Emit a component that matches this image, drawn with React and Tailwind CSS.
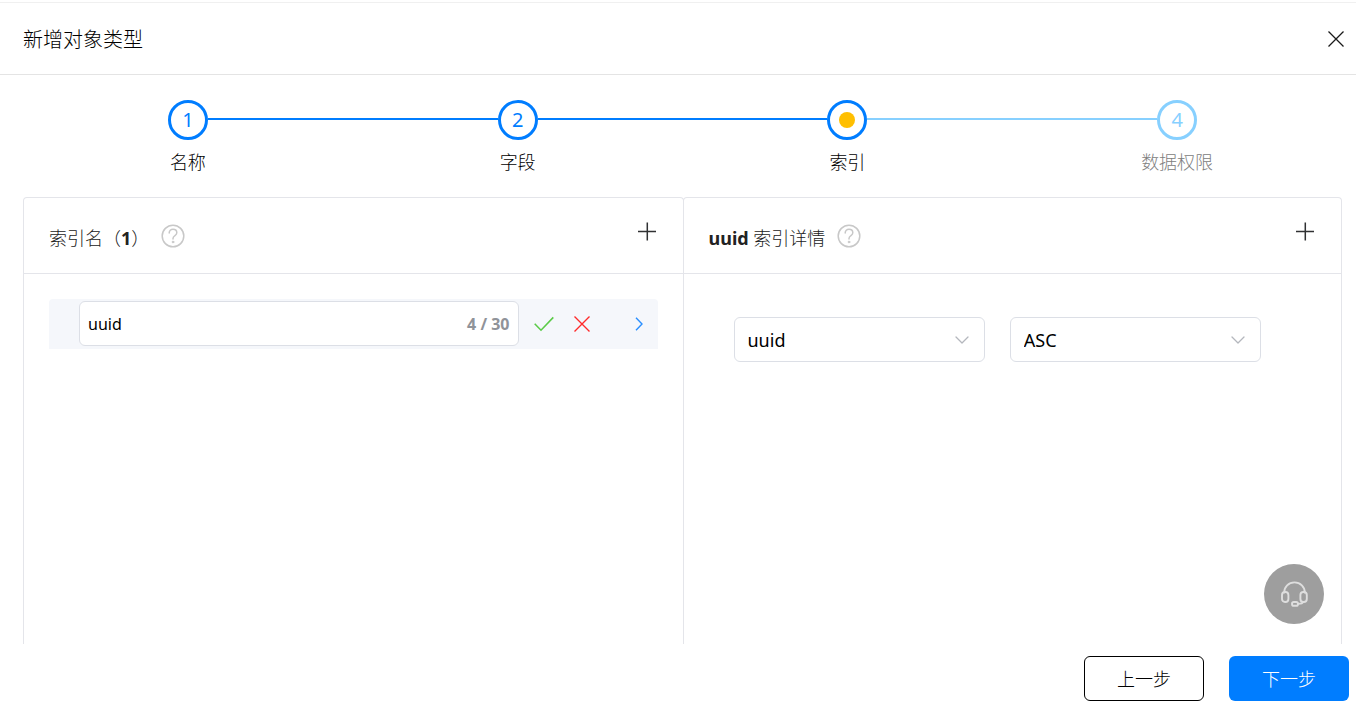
import React, { useState } from 'react';

const steps = [
  { id: 1, label: '名称', status: 'done' },
  { id: 2, label: '字段', status: 'done' },
  { id: 3, label: '索引', status: 'active' },
  { id: 4, label: '数据权限', status: 'wait' },
];

const HelpIcon = () => (
  <svg width="24" height="24" viewBox="0 0 24 24" fill="none" stroke="#c8c8c8" strokeWidth="1.5" strokeLinecap="round">
    <circle cx="12" cy="12" r="10.8" />
    <path d="M8.2 8.9c0-2.1 1.6-3.6 3.8-3.6s3.8 1.5 3.8 3.4c0 1.5-.9 2.2-1.9 3-1.1.8-1.9 1.5-1.9 2.7v.6" />
    <circle cx="12" cy="18" r="0.9" fill="#c8c8c8" strokeWidth="0.8" />
  </svg>
);

const PlusIcon = () => (
  <svg width="20" height="20" viewBox="0 0 20 20" stroke="#303133" strokeWidth="1.5">
    <path d="M1 9.5h18M10.3 0.5v18" />
  </svg>
);

const Step = ({ step, isFirst }) => {
  const wait = step.status === 'wait';
  return (
    <li className="relative flex flex-col items-center">
      {/* Connector to the previous step */}
      {!isFirst && (
        <span
          className={`absolute top-[18px] right-1/2 mr-5 h-0.5 w-[calc(100%-40px)] ${wait ? 'bg-[#87d0ff]' : 'bg-[#007dff]'}`}
        />
      )}
      <span
        className={`flex h-10 w-10 items-center justify-center rounded-full border-3 text-xl ${
          wait ? 'border-[#87d0ff] text-[#87d0ff]' : 'border-[#007dff] text-[#007dff]'
        }`}
      >
        {step.status === 'active' ? <span className="h-4 w-4 rounded-full bg-[#ffbf00]" /> : step.id}
      </span>
      <span className={`mt-2 text-lg font-light ${wait ? 'text-[#808080]' : 'text-black'}`}>{step.label}</span>
    </li>
  );
};

const Panel = ({ title, addLabel, className = '', children }) => (
  <section className={`rounded-t border border-b-0 border-[#e4e5ea] ${className}`}>
    <header className="flex h-[76px] items-start justify-between border-b border-[#e4e5ea] pr-[26px] pl-[25px]">
      <div className="mt-6 flex items-start">
        <h2 className="mt-0.5 text-lg leading-7 font-light text-[#222]">{title}</h2>
        <button type="button" aria-label="帮助" className="ml-3 mt-0.5">
          <HelpIcon />
        </button>
      </div>
      <button type="button" aria-label={addLabel} className="mt-6">
        <PlusIcon />
      </button>
    </header>
    {children}
  </section>
);

const Select = ({ label, value, onChange, options }) => (
  <div className="relative flex-1">
    <select
      aria-label={label}
      value={value}
      onChange={(e) => onChange(e.target.value)}
      className="h-[45px] w-full appearance-none rounded-md border border-[#dcdfe6] bg-white pr-10 pl-[13px] text-lg text-black outline-none"
    >
      {options.map((option) => (
        <option key={option}>{option}</option>
      ))}
    </select>
    <svg
      className="pointer-events-none absolute top-1/2 right-4 -translate-y-1/2"
      width="14" height="8" viewBox="0 0 14 8" fill="none" stroke="#b4b7bd" strokeWidth="1.3" strokeLinecap="round" strokeLinejoin="round"
    >
      <path d="M1 1l6 6 6-6" />
    </svg>
  </div>
);

const App = () => {
  const [name, setName] = useState('uuid');
  const [field, setField] = useState('uuid');
  const [order, setOrder] = useState('ASC');

  return (
    <div className="flex h-screen flex-col bg-white pt-0.5 font-['Noto_Sans','Noto_Sans_CJK_SC',sans-serif]">
      {/* Dialog header */}
      <header className="flex h-[73px] shrink-0 items-center justify-between border-t border-b border-t-[#f0f0f0] border-b-[#e4e4e4] pr-3 pl-[23px]">
        <h1 className="pt-0.5 text-xl font-light text-black">新增对象类型</h1>
        <button type="button" aria-label="关闭">
          <svg width="16" height="16" viewBox="0 0 16 16" stroke="#1a1a1a" strokeWidth="1.3">
            <path d="M0.5 0.5l15 15M15.5 0.5l-15 15" />
          </svg>
        </button>
      </header>

      <main className="flex min-h-0 flex-1 flex-col overflow-hidden pt-[25px] pr-[14px] pl-[23px]">
        <ol className="grid shrink-0 grid-cols-4">
          {steps.map((step, index) => (
            <Step key={step.id} step={step} isFirst={index === 0} />
          ))}
        </ol>

        {/* The two panels share one middle border */}
        <div className="mt-[21px] grid flex-1 grid-cols-2">
          <Panel title={<>索引名（<b className="font-bold">1</b>）</>} addLabel="新增索引" className="-mr-px">
            <div className="mx-[25px] mt-[25px] flex h-[50px] items-start rounded-t bg-[#f5f7fb] pt-0.5 pl-[30px]">
              <div className="flex h-[45px] flex-1 items-center rounded-md border border-[#dcdfe6] bg-white px-2">
                <input
                  aria-label="索引名"
                  type="text"
                  maxLength={30}
                  value={name}
                  onChange={(e) => setName(e.target.value)}
                  className="min-w-0 flex-1 text-base text-black outline-none"
                />
                <span className="text-base font-bold text-[#909399]">{name.length} / 30</span>
              </div>
              <div className="flex h-[45px] items-center pr-[15px] pl-[15px]">
                <button type="button" aria-label="确定">
                  <svg width="20" height="16" viewBox="0 0 20 16" fill="none" stroke="#5bcb48" strokeWidth="1.6">
                    <path d="M0.7 7.8l6.3 6.4L19.3 1.4" />
                  </svg>
                </button>
                <button type="button" aria-label="取消" className="ml-5">
                  <svg width="16" height="16" viewBox="0 0 16 16" stroke="#ff2a2a" strokeWidth="1.4">
                    <path d="M0.5 0.5l15 15M15.5 0.5l-15 15" />
                  </svg>
                </button>
                <button type="button" aria-label="查看详情" className="ml-[45px]">
                  <svg width="8" height="14" viewBox="0 0 8 14" fill="none" stroke="#2a8fff" strokeWidth="1.4">
                    <path d="M1 0.7L7 7l-6 6.3" />
                  </svg>
                </button>
              </div>
            </div>
          </Panel>

          <Panel title={<><b className="font-bold">uuid</b> 索引详情</>} addLabel="新增字段">
            <div className="mt-[43px] flex gap-[25px] pr-20 pl-[50px]">
              <Select label="字段" value={field} onChange={setField} options={['uuid']} />
              <Select label="排序" value={order} onChange={setOrder} options={['ASC', 'DESC']} />
            </div>
          </Panel>
        </div>
      </main>

      <footer className="flex h-[82px] shrink-0 items-start justify-end gap-[25px] pt-3 pr-[7px]">
        <button type="button" className="h-[45px] w-[120px] rounded-md border border-black bg-white text-lg font-light text-black">
          上一步
        </button>
        <button type="button" className="h-[45px] w-[120px] rounded-md bg-[#007dff] text-lg font-light text-white">
          下一步
        </button>
      </footer>

      {/* Support button */}
      <button
        type="button"
        aria-label="在线客服"
        className="fixed right-8 bottom-[102px] flex h-[60px] w-[60px] items-center justify-center rounded-full bg-[#9e9e9e]"
      >
        <svg width="28" height="26" viewBox="0 0 28 26" fill="none" stroke="#dedede" strokeWidth="1.9" strokeLinecap="round">
          <path d="M4.2 11.5C4.2 5.8 8.6 1.4 14.5 1.4s10.3 4.4 10.3 10.1" />
          <rect x="2" y="11" width="6.4" height="10" rx="3" />
          <rect x="20.4" y="11" width="6.4" height="10" rx="3" />
          <path d="M23.4 21c-.8 1.2-2.2 1.8-4.6 1.9" />
          <rect x="12" y="21" width="6" height="3.8" rx="1.9" />
        </svg>
      </button>
    </div>
  );
};

export default App;
